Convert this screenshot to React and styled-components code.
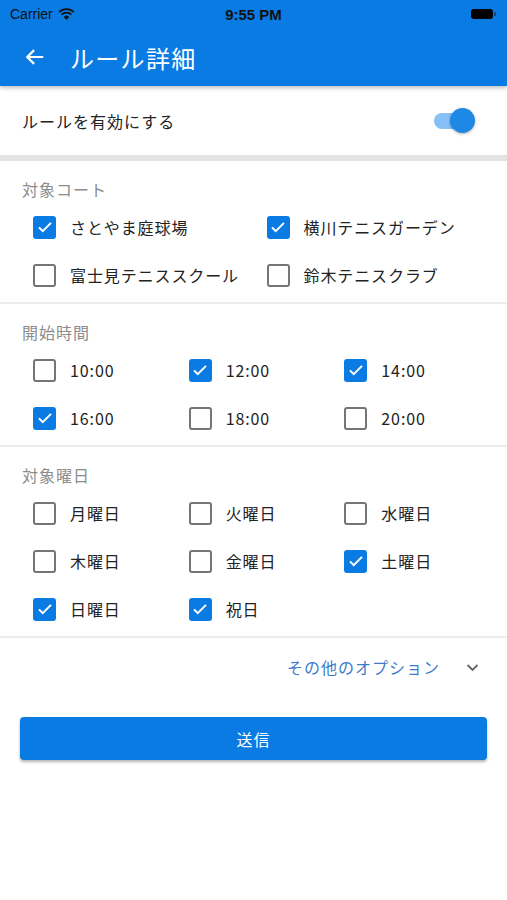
import React from "react"
import styled, {createGlobalStyle} from "styled-components"

const blue = "#0a7be2"
const font = `"Noto Sans CJK JP", "Noto Sans", sans-serif`

const Global = createGlobalStyle`
  body {
    margin: 0;
    background: #fff;
    font-family: ${font};
  }
`

const Page = styled.div`
  width: 507px;
  min-height: 900px;
  background: #fff;
`
const Header = styled.header`
  background: ${blue};
  color: #fff;
  box-shadow: 0 2px 4px rgba(0, 0, 0, 0.25);
  position: relative;
  z-index: 2;
`
const StatusBar = styled.div`
  height: 28px;
  display: grid;
  grid-template-columns: 1fr auto 1fr;
  align-items: center;
  padding: 0 10px;
  color: #111;
  font-family: "Liberation Sans", sans-serif;
  font-size: 14px;
`
const Carrier = styled.div`
  display: flex;
  align-items: center;
  gap: 5px;
`
const Time = styled.div`
  font-weight: bold;
  font-size: 15px;
`
const Battery = styled.div`
  justify-self: end;
  display: flex;
  align-items: center;
  gap: 1px;
  margin-right: 1px;
`
const BatteryBody = styled.div`
  width: 22px;
  height: 10px;
  border-radius: 3px;
  background: #000;
`
const BatteryTip = styled.div`
  width: 2px;
  height: 4px;
  border-radius: 0 1px 1px 0;
  background: rgba(0, 0, 0, 0.4);
`
const TitleBar = styled.div`
  height: 58px;
  display: flex;
  align-items: center;
  padding-left: 24px;
  gap: 24px;
`
const Title = styled.h1`
  margin: 0;
  font-size: 24px;
  font-weight: normal;
  letter-spacing: 1.3px;
`
const ToggleRow = styled.div`
  height: 69px;
  display: flex;
  align-items: center;
  justify-content: space-between;
  padding: 0 35px 0 22px;
  font-size: 16px;
  letter-spacing: 1px;
  color: #222;
  border-bottom: 6px solid #e3e3e3;
`
const Switch = styled.div`
  position: relative;
  width: 38px;
  height: 16px;
  border-radius: 8px;
  background: #85c0f6;
`
const Thumb = styled.div`
  position: absolute;
  right: -3px;
  top: -4.5px;
  width: 25px;
  height: 25px;
  border-radius: 50%;
  background: #1e88e5;
  box-shadow: 0 1px 3px rgba(0, 0, 0, 0.3);
`
const Section = styled.section`
  padding: 18px 18px 3px 22px;
  border-bottom: 2px solid #ececec;
`
const Label = styled.div`
  height: 20px;
  line-height: 20px;
  font-size: 16px;
  letter-spacing: 1px;
  color: #8c8c8c;
  margin-bottom: 4px;
`
const Grid = styled.div`
  display: grid;
  grid-template-columns: repeat(${p => p.cols}, 1fr);
`
const Item = styled.label`
  height: 48px;
  display: flex;
  align-items: center;
  padding-left: 11px;
  gap: 14px;
  font-size: 16px;
  letter-spacing: 0.9px;
  color: #222;
  white-space: nowrap;
`
const Box = styled.span`
  width: 23px;
  height: 23px;
  box-sizing: border-box;
  border-radius: 3px;
  border: ${p => (p.checked ? "none" : "2.5px solid #757575")};
  background: ${p => (p.checked ? blue : "#fff")};
  display: flex;
  align-items: center;
  justify-content: center;
  flex-shrink: 0;
`
const Options = styled.div`
  height: 58px;
  display: flex;
  align-items: center;
  justify-content: flex-end;
  gap: 24px;
  padding-right: 26px;
  font-size: 16px;
  color: #3c7ccb;
  letter-spacing: 1px;
`
const Submit = styled.button`
  display: block;
  margin: 21px 20px 0;
  width: calc(100% - 40px);
  height: 43px;
  border: none;
  border-radius: 4px;
  background: ${blue};
  color: #fff;
  font-family: ${font};
  font-size: 16px;
  letter-spacing: 1px;
  box-shadow: 0 2px 3px rgba(0, 0, 0, 0.3);
`

const Check = ({checked, children}) => (
  <Item>
    <Box checked={checked}>
      {checked && (
        <svg width="18" height="18" viewBox="0 0 24 24">
          <path d="M4 12.5l5 5L20 6.5" fill="none" stroke="#fff" strokeWidth="2.8" />
        </svg>
      )}
    </Box>
    {children}
  </Item>
)

const courts = [
  ["さとやま庭球場", true],
  ["横川テニスガーデン", true],
  ["富士見テニススクール", false],
  ["鈴木テニスクラブ", false],
]
const times = [
  ["10:00", false],
  ["12:00", true],
  ["14:00", true],
  ["16:00", true],
  ["18:00", false],
  ["20:00", false],
]
const days = [
  ["月曜日", false],
  ["火曜日", false],
  ["水曜日", false],
  ["木曜日", false],
  ["金曜日", false],
  ["土曜日", true],
  ["日曜日", true],
  ["祝日", true],
]

const Group = ({label, cols, items}) => (
  <Section>
    <Label>{label}</Label>
    <Grid cols={cols}>
      {items.map(([name, on]) => (
        <Check key={name} checked={on}>
          {name}
        </Check>
      ))}
    </Grid>
  </Section>
)

export default function App() {
  return (
    <Page>
      <Global />
      <Header>
        <StatusBar>
          <Carrier>
            Carrier
            <svg width="17" height="12" viewBox="0 0 17 12">
              <path d="M8.5 12L5.8 8.9a3.8 3.8 0 0 1 5.4 0z" fill="#111" />
              <path d="M3.6 6.6a7 7 0 0 1 9.8 0" fill="none" stroke="#111" strokeWidth="1.8" />
              <path d="M1.2 4a10.5 10.5 0 0 1 14.6 0" fill="none" stroke="#111" strokeWidth="1.8" />
            </svg>
          </Carrier>
          <Time>9:55 PM</Time>
          <Battery>
            <BatteryBody />
            <BatteryTip />
          </Battery>
        </StatusBar>
        <TitleBar>
          <svg width="22" height="22" viewBox="0 0 24 24">
            <path d="M21 12H4M11 4.5L3.5 12l7.5 7.5" fill="none" stroke="#fff" strokeWidth="2.4" />
          </svg>
          <Title>ルール詳細</Title>
        </TitleBar>
      </Header>
      <ToggleRow>
        ルールを有効にする
        <Switch>
          <Thumb />
        </Switch>
      </ToggleRow>
      <Group label="対象コート" cols={2} items={courts} />
      <Group label="開始時間" cols={3} items={times} />
      <Group label="対象曜日" cols={3} items={days} />
      <Options>
        その他のオプション
        <svg width="17" height="17" viewBox="0 0 24 24">
          <path d="M5 8.5l7 7 7-7" fill="none" stroke="#666" strokeWidth="2.6" />
        </svg>
      </Options>
      <Submit>送信</Submit>
    </Page>
  )
}
